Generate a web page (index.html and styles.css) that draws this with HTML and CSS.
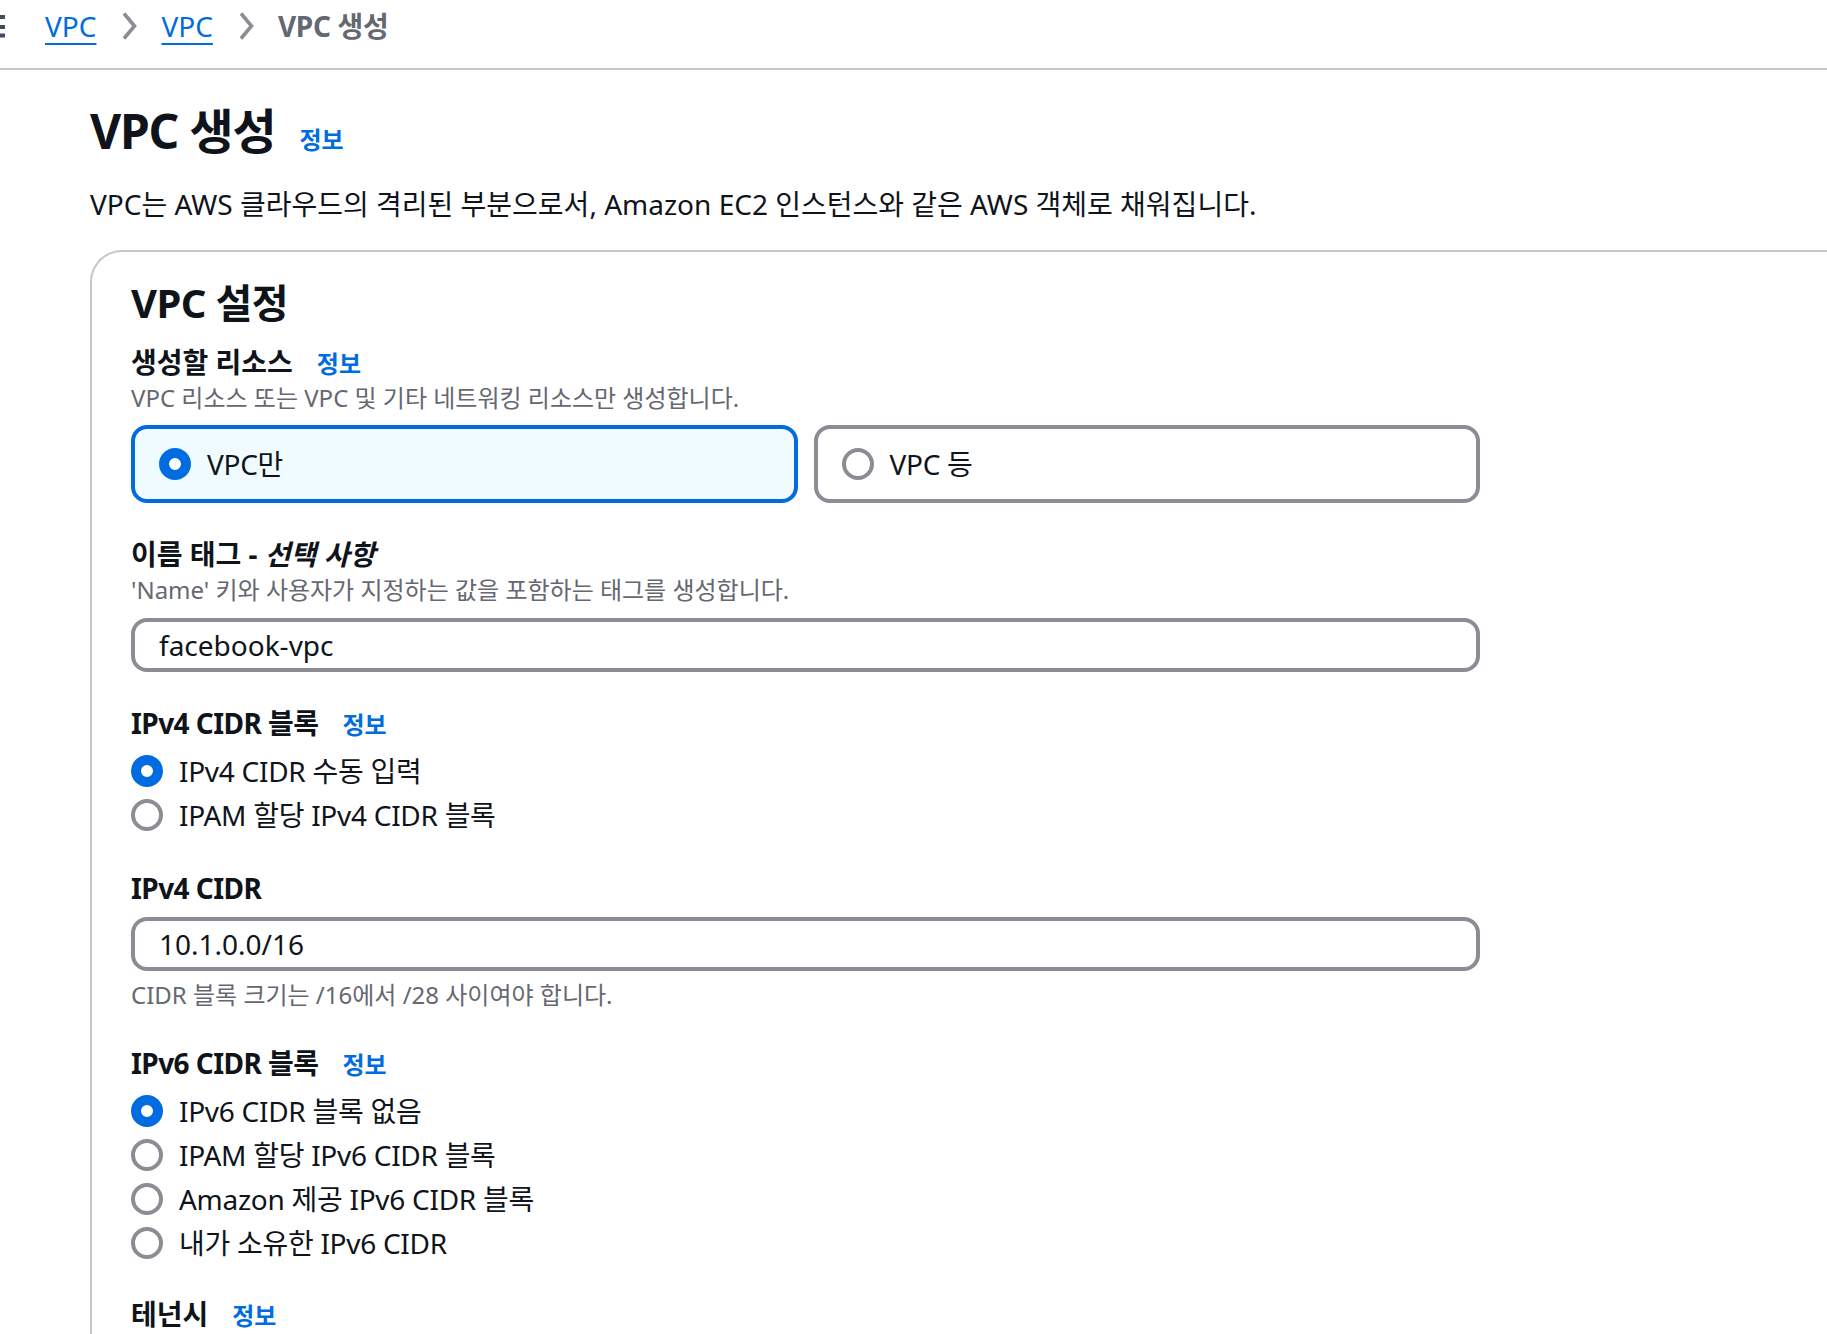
FILE: index.html
```html
<!DOCTYPE html>
<html lang="ko">
<head>
<meta charset="utf-8">
<title>VPC 생성</title>
<link rel="stylesheet" href="styles.css">
</head>
<body>
<nav class="crumbs">
  <svg class="menu-edge" width="5" height="24" viewBox="0 0 5 24" aria-hidden="true">
    <rect x="0" y="1" width="5" height="4"/>
    <rect x="0" y="11" width="5" height="4"/>
    <rect x="0" y="19.5" width="5" height="4"/>
  </svg>
  <a class="crumb-link" href="#">VPC</a>
  <svg class="chev" width="16" height="28" viewBox="0 0 16 28" aria-hidden="true"><path d="M3 1.5 L13.5 14 L3 26.5"/></svg>
  <a class="crumb-link" href="#">VPC</a>
  <svg class="chev" width="16" height="28" viewBox="0 0 16 28" aria-hidden="true"><path d="M3 1.5 L13.5 14 L3 26.5"/></svg>
  <span class="crumb-current">VPC 생성</span>
</nav>

<main class="page">
  <div class="page-head">
    <h1 class="page-title">VPC 생성</h1>
    <a class="info" href="#">정보</a>
  </div>
  <p class="lead">VPC는 AWS 클라우드의 격리된 부분으로서, Amazon EC2 인스턴스와 같은 AWS 객체로 채워집니다.</p>

  <section class="panel">
    <h2 class="panel-title">VPC 설정</h2>
    <div class="form">
      <div class="field">
        <div class="label-row"><span class="label">생성할 리소스</span><a class="info" href="#">정보</a></div>
        <p class="desc">VPC 리소스 또는 VPC 및 기타 네트워킹 리소스만 생성합니다.</p>
        <div class="tiles">
          <div class="tile selected"><span class="radio checked"></span><span class="opt">VPC만</span></div>
          <div class="tile"><span class="radio"></span><span class="opt">VPC 등</span></div>
        </div>
      </div>

      <div class="field">
        <div class="label-row"><span class="label">이름 태그 - <em>선택 사항</em></span></div>
        <p class="desc">'Name' 키와 사용자가 지정하는 값을 포함하는 태그를 생성합니다.</p>
        <div class="text-input">facebook-vpc</div>
      </div>

      <div class="field">
        <div class="label-row"><span class="label label-latin">IPv4 CIDR 블록</span><a class="info" href="#">정보</a></div>
        <div class="radios">
          <div class="radio-row"><span class="radio checked"></span><span class="opt">IPv4 CIDR 수동 입력</span></div>
          <div class="radio-row"><span class="radio"></span><span class="opt">IPAM 할당 IPv4 CIDR 블록</span></div>
        </div>
      </div>

      <div class="field">
        <div class="label-row"><span class="label label-latin">IPv4 CIDR</span></div>
        <div class="text-input">10.1.0.0/16</div>
        <p class="help">CIDR 블록 크기는 /16에서 /28 사이여야 합니다.</p>
      </div>

      <div class="field">
        <div class="label-row"><span class="label label-latin">IPv6 CIDR 블록</span><a class="info" href="#">정보</a></div>
        <div class="radios">
          <div class="radio-row"><span class="radio checked"></span><span class="opt">IPv6 CIDR 블록 없음</span></div>
          <div class="radio-row"><span class="radio"></span><span class="opt">IPAM 할당 IPv6 CIDR 블록</span></div>
          <div class="radio-row"><span class="radio"></span><span class="opt">Amazon 제공 IPv6 CIDR 블록</span></div>
          <div class="radio-row"><span class="radio"></span><span class="opt">내가 소유한 IPv6 CIDR</span></div>
        </div>
      </div>

      <div class="field field-last">
        <div class="label-row"><span class="label">테넌시</span><a class="info" href="#">정보</a></div>
      </div>
    </div>
  </section>
</main>
</body>
</html>
```

FILE: styles.css
```css
* {
  box-sizing: border-box;
}

html,
body {
  margin: 0;
  padding: 0;
  overflow: hidden;
  background: #ffffff;
}

body {
  font-family: "Noto Sans", "Noto Sans CJK KR", sans-serif;
  font-size: 28px;
  line-height: 36px;
  color: #0f141a;
}

/* ---------- breadcrumbs ---------- */
.crumbs {
  height: 70px;
  padding-top: 8px;
  border-bottom: 2px solid #c6c6cd;
  display: flex;
  align-items: flex-start;
}

.crumbs > * {
  flex: none;
}

.menu-edge {
  fill: #414d5c;
  margin-top: 6px;
  margin-right: 40px;
}

.crumb-link {
  color: #006ce0;
  font-size: 28px;
  line-height: 36px;
  text-decoration: underline;
  text-decoration-thickness: 2px;
  text-underline-offset: 6px;
}

.chev {
  margin: 4px 24px 0 25px;
  fill: none;
  stroke: #8c8c94;
  stroke-width: 3.6;
}

.crumb-current {
  color: #656871;
  font-weight: 700;
  font-size: 28px;
  line-height: 36px;
  letter-spacing: -0.01em;
}

/* ---------- page header ---------- */
.page {
  padding-left: 90px;
}

.page-head {
  margin-top: 33px;
  display: flex;
  align-items: baseline;
  gap: 24px;
}

.page-title {
  margin: 0;
  font-size: 48px;
  line-height: 56px;
  font-weight: 700;
  letter-spacing: -0.025em;
}

.info {
  color: #006ce0;
  font-size: 24px;
  line-height: 32px;
  font-weight: 700;
  text-decoration: none;
}

.lead {
  margin: 27px 0 0;
  font-size: 28px;
  line-height: 36px;
}

/* ---------- container ---------- */
.panel {
  margin-top: 28px;
  border: 2px solid #c6c6cd;
  border-right: 0;
  border-radius: 32px 0 0 0;
  padding: 27px 0 120px 39px;
}

.panel-title {
  margin: 0 0 17px;
  font-size: 40px;
  line-height: 48px;
  font-weight: 700;
  letter-spacing: -0.015em;
}

.form {
  width: 1349px;
}

.field + .field {
  margin-top: 33px;
}

.field + .field-last {
  margin-top: 31px;
}

.label-row {
  display: flex;
  align-items: baseline;
  gap: 24px;
}

.label {
  font-size: 28px;
  line-height: 36px;
  font-weight: 700;
}

.label-latin {
  letter-spacing: -0.02em;
}

.label em {
  font-style: italic;
}

.desc {
  margin: 1px 0 0;
  font-size: 24px;
  line-height: 34px;
  color: #656871;
}

.help {
  margin: 7px 0 0;
  font-size: 24px;
  line-height: 34px;
  color: #656871;
}

/* ---------- tiles ---------- */
.tiles {
  margin-top: 10px;
  display: grid;
  grid-template-columns: 1fr 1fr;
  gap: 16px;
}

.tile {
  height: 78px;
  border: 4px solid #8c8c94;
  border-radius: 16px;
  padding: 0 24px;
  display: flex;
  align-items: center;
  gap: 16px;
  background: #ffffff;
}

.tile.selected {
  border-color: #006ce0;
  background: #f0fbff;
}

/* ---------- radios ---------- */
.radio {
  flex: none;
  width: 32px;
  height: 32px;
  border-radius: 50%;
  border: 4px solid #8c8c94;
  background: #ffffff;
}

.radio.checked {
  border: 10px solid #006ce0;
}

.opt {
  font-size: 28px;
  line-height: 36px;
  color: #0f141a;
  letter-spacing: -0.01em;
}

.radios {
  margin-top: 8px;
}

.radio-row {
  height: 44px;
  display: flex;
  align-items: center;
  gap: 16px;
}

/* ---------- inputs ---------- */
.text-input {
  margin-top: 11px;
  height: 54px;
  border: 4px solid #8c8c94;
  border-radius: 16px;
  padding: 0 24px;
  display: flex;
  align-items: center;
  font-size: 28px;
  color: #0f141a;
}
```
